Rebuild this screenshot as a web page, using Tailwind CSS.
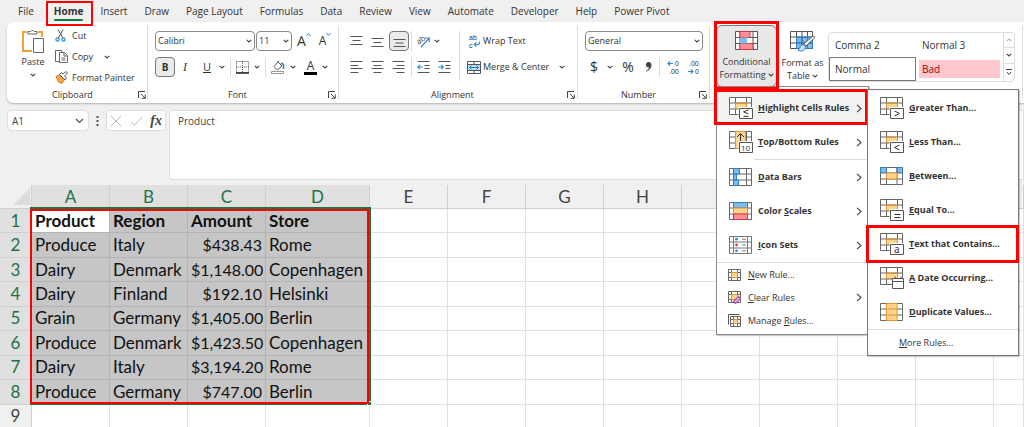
<!DOCTYPE html>
<html lang="en">
<head>
<meta charset="utf-8">
<title>Workbook</title>
<script src="https://cdn.jsdelivr.net/npm/@tailwindcss/browser@4"></script>
</head>
<body class="bg-[#f0f0f0] text-[#333] font-['Open_Sans','Noto_Sans',sans-serif] text-[10px] leading-[14px]">

<svg class="hidden">
  <symbol id="chev" viewBox="0 0 6 4"><path d="M.7.8 3 3 5.3.8" fill="none" stroke="#444" stroke-width="1.1"/></symbol>
  <symbol id="right" viewBox="0 0 6 9"><path d="M1 .8 5 4.500 1 8.200" fill="none" stroke="#444" stroke-width="1.1"/></symbol>
  <symbol id="launch" viewBox="0 0 8 8"><path d="M.5 7V.5H7M3 3l4 4M7.300 3.500v3.800H3.500" fill="none" stroke="#444"/></symbol>
  <symbol id="grid" viewBox="0 0 24 22">
    <path d="M.5.5h22v17H.5z" fill="#fff"/><path d="M6.500 6h11v6h-11z" fill="#fbd68c"/>
    <path d="M.5.5h22v17H.5zM.5 6h22M.5 12h22M6.500.5v17M17.500.5v17" fill="none" stroke="#666"/>
    <path d="M6.500 12V6h11v6" fill="none" stroke="#e8912d"/>
  </symbol>
  <symbol id="badge" viewBox="0 0 24 22"><path d="M9.500 10h15v12h-15z" fill="#fff"/><path d="M10.500 11.500h13v10h-13z" fill="#fff" stroke="#555"/></symbol>
</svg>

<div class="flex h-screen flex-col overflow-hidden">

  <!-- Ribbon tabs -->
  <nav class="flex h-[22px] shrink-0 items-center gap-[17px] pb-px pl-[18px] whitespace-nowrap">
    <a href="#">File</a>
    <a href="#" class="relative ml-[3px] font-bold text-[#333]">Home
      <span class="absolute inset-x-0 -bottom-[3px] h-[2px] rounded bg-[#107c41]"></span>
      <span class="absolute -right-[10px] -left-[8px] -top-[3px] -bottom-[8px] z-10 border-2 border-[#f00]"></span>
    </a>
    <a href="#">Insert</a><a href="#">Draw</a><a href="#">Page Layout</a><a href="#">Formulas</a><a href="#">Data</a><a href="#">Review</a><a href="#">View</a><a href="#">Automate</a><a href="#">Developer</a><a href="#">Help</a><a href="#">Power Pivot</a>
  </nav>

  <!-- Ribbon -->
  <div class="ml-[7px] flex h-[81px] shrink-0 rounded-l-md bg-white text-[9px] whitespace-nowrap shadow-[0_1px_2px_rgba(0,0,0,0.25)]">

    <section class="relative flex w-[141px] shrink-0 pt-[3px]">
      <button class="flex w-[48px] flex-col items-center pt-[3px] pl-[4px]">
        <svg class="h-[26px] w-[24px]" viewBox="0 0 24 26"><path d="M6 4H2v19h9M17 4h4v5" fill="none" stroke="#f0a33a" stroke-width="2"/><path d="M7 6V3.500h2.500a2.500 2.500 0 0 1 4 0H16V6z" fill="#fff" stroke="#666"/><path d="M12.500 10.500h10v14h-10z" fill="#fff" stroke="#666"/></svg>
        <span class="mt-px">Paste</span>
        <svg class="mt-[4px] h-[4px] w-[6px]"><use href="#chev"/></svg>
      </button>
      <div class="flex flex-col items-start">
        <button class="flex h-[21px] items-center gap-[5px]">
          <svg class="h-[13px] w-[12px]" viewBox="0 0 12 13"><path d="M3 .5 8 9M8 .5 3.500 9" fill="none" stroke="#555"/><circle cx="2.500" cy="10.500" r="1.600" fill="none" stroke="#2f8fd6" stroke-width="1.300"/><circle cx="8.500" cy="10.500" r="1.600" fill="none" stroke="#2f8fd6" stroke-width="1.300"/></svg>
          Cut</button>
        <button class="flex h-[21px] items-center gap-[4px]">
          <svg class="h-[13px] w-[13px]" viewBox="0 0 13 13"><path d="M4 11.500H.5V.5h6l1 2M4.500 2.500h5l3 3v7h-8zM9 3v3h3M6.500 8h4M6.500 10h4" fill="none" stroke="#666"/></svg>
          Copy <svg class="ml-[7px] h-[4px] w-[6px]"><use href="#chev"/></svg></button>
        <button class="flex h-[21px] items-center gap-[4px]">
          <svg class="h-[13px] w-[13px]" viewBox="0 0 13 13"><path d="M1 5.500 5 4l4.500 4.500L7 12.500 3.500 11z" fill="#f5a742" stroke="#e07b28"/><path d="m4.500 3.500 5.500 5.500 1.500-2-2-2 3-3L11 .5 8 3 6.500 1.500z" fill="#fff" stroke="#555"/></svg>
          Format Painter</button>
      </div>
      <span class="absolute bottom-[1px] left-[45px]">Clipboard</span>
      <svg class="absolute right-[2px] bottom-[4px] h-[8px] w-[8px]"><use href="#launch"/></svg>
      <span class="absolute top-[4px] right-0 bottom-[4px] w-px bg-[#ddd]"></span>
    </section>

    <section class="relative flex w-[191px] shrink-0 flex-col gap-[6px] pt-[9px] pl-[7px]">
      <div class="flex h-[20px] items-center">
        <button class="flex h-[20px] w-[100px] items-center justify-between rounded border border-[#8a8a8a] px-[2px]">Calibri <svg class="h-[4px] w-[6px]"><use href="#chev"/></svg></button>
        <button class="ml-[1px] flex h-[20px] w-[36px] items-center justify-between rounded border border-[#8a8a8a] px-[2px]">11 <svg class="h-[4px] w-[6px]"><use href="#chev"/></svg></button>
        <button class="ml-[5px] flex items-start text-[14px] leading-[18px]" aria-label="Grow font">A<svg class="h-[5px] w-[5px]" viewBox="0 0 5 5"><path d="M.5 4l2-2.500 2 2.500" fill="none" stroke="#2f8fd6"/></svg></button>
        <button class="ml-[8px] flex items-start text-[12px] leading-[18px]" aria-label="Shrink font">A<svg class="h-[5px] w-[5px]" viewBox="0 0 5 5"><path d="M.5 1l2 2.500 2-2.500" fill="none" stroke="#2f8fd6"/></svg></button>
      </div>
      <div class="flex h-[20px] items-center">
        <button class="h-[20px] w-[20px] rounded border border-[#777] bg-[#ebebeb] text-[10px] font-bold">B</button>
        <button class="w-[20px] font-['Liberation_Serif',serif] text-[12px] italic">I</button>
        <button class="w-[24px] text-[11px] underline">U</button>
        <svg class="h-[4px] w-[6px]"><use href="#chev"/></svg>
        <span class="mx-[5px] h-[20px] w-px bg-[#ddd]"></span>
        <svg class="h-[13px] w-[13px]" viewBox="0 0 13 13"><path d="M.5.5h12v11H.5zM6.500 0v12M0 6h13" fill="none" stroke="#555" stroke-dasharray="1 1"/><path d="M0 12h13" stroke="#222" stroke-width="1.500"/></svg>
        <svg class="ml-[5px] h-[4px] w-[6px]"><use href="#chev"/></svg>
        <span class="mx-[5px] h-[20px] w-px bg-[#ddd]"></span>
        <svg class="h-[14px] w-[14px]" viewBox="0 0 14 14"><path d="M3 6.500 7 2l4 4-4.500 4z M7 2V.5" fill="#fff" stroke="#555"/><path d="m10 3 2.500 1.500L12.500 9" fill="none" stroke="#2f7fc6" stroke-width="1.500"/><path d="M.5 11.500h12v2H.5z" fill="#fff" stroke="#999"/></svg>
        <svg class="ml-[5px] h-[4px] w-[6px]"><use href="#chev"/></svg>
        <button class="ml-[8px] h-[16px] w-[13px] border-b-[3px] border-black text-[12px] leading-[13px]">A</button>
        <svg class="ml-[5px] h-[4px] w-[6px]"><use href="#chev"/></svg>
      </div>
      <span class="absolute bottom-[1px] left-[80px]">Font</span>
      <svg class="absolute right-[3px] bottom-[4px] h-[8px] w-[8px]"><use href="#launch"/></svg>
      <span class="absolute top-[4px] right-0 bottom-[4px] w-px bg-[#ddd]"></span>
    </section>

    <section class="relative flex w-[239px] shrink-0 pt-[9px] pl-[8px]">
      <div class="flex flex-col gap-[6px]">
        <div class="flex h-[20px] items-center">
          <svg class="mx-[3px] h-[12px] w-[13px]" viewBox="0 0 13 12"><path d="M.5 1.500h12M2.500 5.500h8M.5 9.500h12" stroke="#555"/></svg>
          <svg class="mx-[5px] h-[12px] w-[13px]" viewBox="0 0 13 12"><path d="M.5 3.500h12M2.500 7.500h8M.5 11.500h12" stroke="#555"/></svg>
          <button class="flex h-[20px] w-[20px] items-center justify-center rounded border border-[#777] bg-[#ebebeb]" aria-label="Bottom align"><svg class="h-[14px] w-[13px]" viewBox="0 0 13 14"><path d="M.5 5.500h12M2.500 9h8M.5 12.500h12" stroke="#555"/></svg></button>
          <span class="mx-[2px] h-[20px] w-px bg-[#ddd]"></span>
          <svg class="ml-[2px] h-[14px] w-[15px] overflow-visible" viewBox="0 0 15 14"><text x="0" y="9" font-size="8" fill="#444" transform="rotate(-35 4 6)">ab</text><path d="M5 13 13 4.500M9 4h4.300v4" fill="none" stroke="#2f8fd6" stroke-width="1.200"/></svg>
          <svg class="ml-[3px] h-[4px] w-[6px]"><use href="#chev"/></svg>
        </div>
        <div class="flex h-[20px] items-center">
          <svg class="mx-[3px] h-[12px] w-[13px]" viewBox="0 0 13 12"><path d="M.5 .5h12M.5 4.500h8M.5 7.500h12M.5 11.500h8" stroke="#555"/></svg>
          <svg class="mx-[5px] h-[12px] w-[13px]" viewBox="0 0 13 12"><path d="M.5 .5h12M2.500 4.500h8M.5 7.500h12M2.500 11.500h8" stroke="#555"/></svg>
          <svg class="mx-[3px] h-[12px] w-[13px]" viewBox="0 0 13 12"><path d="M.5 .5h12M4.500 4.500h8M.5 7.500h12M4.500 11.500h8" stroke="#555"/></svg>
          <span class="mx-[3px] h-[20px] w-px bg-[#ddd]"></span>
          <svg class="ml-[2px] h-[12px] w-[13px]" viewBox="0 0 13 12"><path d="M.5 .5h12M7.500 4.500h5M7.500 7.500h5M.5 11.500h12" stroke="#555"/><path d="M6 6H1M3 3.800.8 6 3 8.200" fill="none" stroke="#2f8fd6" stroke-width="1.200"/></svg>
          <svg class="ml-[8px] h-[12px] w-[13px]" viewBox="0 0 13 12"><path d="M.5 .5h12M7.500 4.500h5M7.500 7.500h5M.5 11.500h12" stroke="#555"/><path d="M0 6h5M3.200 3.800 5.400 6 3.200 8.200" fill="none" stroke="#2f8fd6" stroke-width="1.200"/></svg>
        </div>
      </div>
      <span class="ml-[8px] h-[50px] w-px bg-[#ddd]"></span>
      <div class="ml-[7px] flex flex-col gap-[6px]">
        <button class="flex h-[20px] items-center gap-[2px]"><svg class="h-[15px] w-[14px] overflow-visible font-['Liberation_Sans',sans-serif]" viewBox="0 0 14 15"><text x="2" y="6" font-size="7" fill="#333">ab</text><text x="2" y="14" font-size="7" fill="#333">c</text><path d="M12.500 7.500V9a1.500 1.500 0 0 1-1.500 1.500H7.500M9.500 8.200 7.300 10.500l2.200 2.200" fill="none" stroke="#2f8fd6" stroke-width="1.200"/></svg>Wrap Text</button>
        <button class="flex h-[20px] items-center gap-[2px]"><svg class="h-[13px] w-[14px]" viewBox="0 0 14 13"><path d="M.5 3.500h13v6H.5z" fill="#bfe0f7"/><path d="M.5.5h13v12H.5zM.5 3.500h13M.5 9.500h13M7 .5v3M7 9.500v3" fill="none" stroke="#555"/><path d="M2.500 6.500h9M4.500 4.500l-2 2 2 2M9.500 4.500l2 2-2 2" fill="none" stroke="#1f7fd0"/></svg>Merge &amp; Center<svg class="ml-[8px] h-[4px] w-[6px]"><use href="#chev"/></svg></button>
      </div>
      <span class="absolute bottom-[1px] left-[92px]">Alignment</span>
      <svg class="absolute right-[3px] bottom-[4px] h-[8px] w-[8px]"><use href="#launch"/></svg>
      <span class="absolute top-[4px] right-0 bottom-[4px] w-px bg-[#ddd]"></span>
    </section>

    <section class="relative flex w-[132px] shrink-0 flex-col gap-[6px] pt-[9px] pl-[7px]">
      <button class="flex h-[20px] w-[118px] items-center justify-between rounded border border-[#8a8a8a] px-[2px]">General <svg class="h-[4px] w-[6px]"><use href="#chev"/></svg></button>
      <div class="flex h-[20px] items-center">
        <button class="w-[18px] text-[14px]">$</button>
        <svg class="ml-[4px] h-[4px] w-[6px]"><use href="#chev"/></svg>
        <button class="ml-[6px] w-[18px] text-[14px]">%</button>
        <svg class="ml-[8px] h-[10px] w-[7px]" viewBox="0 0 7 10"><path d="M3 0a3 3 0 0 1 3.500 3C6.500 6 4.500 8.500 1 9.800L.8 9C3 8 4 6.800 4 5.500A2.800 2.800 0 0 1 3 0z" fill="#444"/></svg>
        <span class="mx-[7px] h-[20px] w-px bg-[#ddd]"></span>
        <svg class="h-[15px] w-[14px] overflow-visible font-['Liberation_Sans',sans-serif]" viewBox="0 0 14 15"><path d="M6 3.500H1M3 1.500l-2 2 2 2" fill="none" stroke="#2f8fd6" stroke-width="1.200"/><text x="8" y="6" font-size="7" fill="#333">0</text><text x="2" y="14" font-size="7" fill="#333">.00</text></svg>
        <svg class="ml-[6px] h-[15px] w-[14px] overflow-visible font-['Liberation_Sans',sans-serif]" viewBox="0 0 14 15"><path d="M1 11.500h5M4 9.500l2 2-2 2" fill="none" stroke="#2f8fd6" stroke-width="1.200"/><text x="2" y="6" font-size="7" fill="#333">.00</text><text x="8" y="14" font-size="7" fill="#333">0</text></svg>
      </div>
      <span class="absolute bottom-[1px] left-[43px]">Number</span>
      <svg class="absolute right-[3px] bottom-[4px] h-[8px] w-[8px]"><use href="#launch"/></svg>
      <span class="absolute top-[4px] right-0 bottom-[4px] w-px bg-[#ddd]"></span>
    </section>

    <section class="relative flex min-w-0 grow gap-[3px] pt-[3px] pl-[6px]">
      <!-- Conditional formatting and its menus -->
      <div class="relative h-[62px] w-[61px] shrink-0">
        <button class="flex h-[62px] w-full flex-col items-center rounded-md border border-[#777] bg-[#e8e8e8] pt-[5px] leading-[13px]">
          <svg class="mb-[5px] h-[19px] w-[23px]" viewBox="0 0 23 19"><path d="M.5.5h22v18H.5z" fill="#fff"/><path d="M.5.5h22v18H.5zM.5 6.500h22M.5 12.500h22M5 .5v18M18 .5v18M11.500.5v18" fill="none" stroke="#555"/><path d="M5 .5h10v6H5zM5 12.500h13v6H5z" fill="#ff8f96" stroke="#d9363e"/><path d="M5 6.500h7v6H5z" fill="#7fbcec"/></svg>
          <span>Conditional</span>
          <span class="flex items-center gap-[2px]">Formatting <svg class="h-[4px] w-[6px]"><use href="#chev"/></svg></span>
        </button>
        <span class="pointer-events-none absolute -top-[4px] -right-[2px] -bottom-[3px] -left-[2px] z-30 border-[3px] border-[#f00]"></span>

        <div class="absolute top-[61px] left-0 z-20 w-[153px] border border-[#8a8a8a] bg-white pt-[4px] pb-[2px] text-[#333] shadow-[1px_1px_1px_rgba(0,0,0,0.2)]">
          <button class="relative flex h-[34px] w-full items-center bg-[#f2f2f2] pl-[12px] font-bold">
            <svg class="h-[22px] w-[25px] shrink-0" viewBox="0 0 25 22"><use href="#grid" width="24" height="22"/><use href="#badge" width="24" height="22"/><path d="m19.500 12.800-5 2 5 2M14.500 19.300h5" fill="none" stroke="#333"/></svg>
            <span class="ml-[4px]"><u>H</u>ighlight Cells Rules</span><svg class="absolute right-[6px] h-[9px] w-[6px]"><use href="#right"/></svg>
            <span class="pointer-events-none absolute -top-[2px] right-0 bottom-0 -left-[3px] border-[3px] border-[#f00]"></span>
          </button>
          <button class="relative flex h-[34px] w-full items-center pl-[12px] font-bold">
            <svg class="h-[22px] w-[25px] shrink-0" viewBox="0 0 25 22"><path d="M.5.5h22v17H.5zM.5 6h22M.5 12h22M6.500.5v17M17.500.5v17" fill="#fff" stroke="#666"/><path d="M6.500.5h10v17h-10z" fill="#fbd68c" stroke="#e8912d"/><path d="M11.500 12V3M8 6l3.500-3.500L15 6" fill="none" stroke="#333"/><use href="#badge" width="24" height="22"/><text x="12" y="20" font-size="8" font-weight="400" fill="#333">10</text></svg>
            <span class="ml-[4px]"><u>T</u>op/Bottom Rules</span><svg class="absolute right-[6px] h-[9px] w-[6px]"><use href="#right"/></svg>
          </button>
          <hr class="ml-[37px] border-[#ddd]">
          <button class="relative flex h-[34px] w-full items-center pl-[12px] font-bold">
            <svg class="h-[18px] w-[25px] shrink-0" viewBox="0 0 25 18"><path d="M.5.5h22v17H.5zM.5 6h22M.5 12h22M4.500.5v17M17.500.5v17" fill="#fff" stroke="#666"/><path d="M4.500.5h6v5.500h-6zM4.500 6h3v6h-3zM4.500 12h5v5.500h-5z" fill="#7fbcec" stroke="#2f7fc6"/></svg>
            <span class="ml-[4px]"><u>D</u>ata Bars</span><svg class="absolute right-[6px] h-[9px] w-[6px]"><use href="#right"/></svg>
          </button>
          <button class="relative flex h-[34px] w-full items-center pl-[12px] font-bold">
            <svg class="h-[18px] w-[25px] shrink-0" viewBox="0 0 25 18"><path d="M.5.5h22v17H.5zM.5 6h22M.5 12h22" fill="#fff" stroke="#666"/><path d="M4.500.5h14V6h-14z" fill="#7fbcec" stroke="#2f7fc6"/><path d="M4.500 6h14v6h-14z" fill="#fbd68c" stroke="#e8912d"/><path d="M4.500 12h14v5.500h-14z" fill="#ff8f96" stroke="#d9363e"/></svg>
            <span class="ml-[4px]">Color <u>S</u>cales</span><svg class="absolute right-[6px] h-[9px] w-[6px]"><use href="#right"/></svg>
          </button>
          <button class="relative flex h-[34px] w-full items-center pl-[12px] font-bold">
            <svg class="h-[18px] w-[25px] shrink-0" viewBox="0 0 25 18"><path d="M.5.5h22v17H.5zM.5 6h22M.5 12h22M4.500.5v17M18.500.5v17" fill="#fff" stroke="#777"/><path d="M13 3.200h4M13 9h4M13 14.800h4" stroke="#777"/><circle cx="7.500" cy="3.200" r="1.400" fill="#2f8fd6"/><circle cx="7.500" cy="9" r="1.400" fill="#e23b43"/><circle cx="7.500" cy="14.800" r="1.400" fill="#2f8fd6"/></svg>
            <span class="ml-[4px]"><u>I</u>con Sets</span><svg class="absolute right-[6px] h-[9px] w-[6px]"><use href="#right"/></svg>
          </button>
          <hr class="border-[#ddd]">
          <button class="flex h-[23px] w-full items-center gap-[7px] pl-[11px]">
            <svg class="h-[12px] w-[13px]" viewBox="0 0 13 12"><path d="M.5.5h12v11H.5zM.5 3.500h12M.5 8.500h12M3.500.5v11M9.500.5v11" fill="#fff" stroke="#666"/><path d="M3.500 3.500h6v5h-6z" fill="#fbd68c" stroke="#e8912d"/></svg>
            <span><u>N</u>ew Rule...</span></button>
          <button class="relative flex h-[23px] w-full items-center gap-[7px] pl-[11px]">
            <svg class="h-[13px] w-[13px]" viewBox="0 0 13 13"><path d="M.5.5h12v11H.5zM.5 3.500h12M.5 8.500h12M3.500.5v11M9.500.5v11" fill="#fff" stroke="#666"/><path d="M3.500 3.500h6v5h-6z" fill="#fbd68c" stroke="#e8912d"/><path d="m5.500 10.500 5-5 2 2-5 5z" fill="#e5c4ec" stroke="#a34bb5" stroke-width="1.200"/></svg>
            <span><u>C</u>lear Rules</span><svg class="absolute right-[6px] h-[9px] w-[6px]"><use href="#right"/></svg></button>
          <button class="flex h-[23px] w-full items-center gap-[7px] pl-[11px]">
            <svg class="h-[13px] w-[13px]" viewBox="0 0 13 13"><path d="M.5 10.500V.5h11" fill="none" stroke="#555"/><path d="M2.500 2.500h10v10h-10zM2.500 5.500h10M2.500 9.500h10M5.500 2.500v10M9.500 2.500v10" fill="#fff" stroke="#666"/><path d="M5.500 5.500h4v4h-4z" fill="#fbd68c" stroke="#e8912d"/></svg>
            <span>Manage <u>R</u>ules...</span></button>
        </div>

        <div class="absolute top-[64px] left-[151px] z-20 w-[152px] border border-[#777] bg-white pt-px text-[#333] shadow-[1px_1px_1px_rgba(0,0,0,0.2)]">
          <button class="flex h-[34px] w-full items-center pl-[12px] font-bold">
            <svg class="h-[22px] w-[25px] shrink-0" viewBox="0 0 25 22"><use href="#grid" width="24" height="22"/><use href="#badge" width="24" height="22"/><path d="m14.500 14 5 2.500-5 2.500" fill="none" stroke="#333"/></svg>
            <span class="ml-[4px]"><u>G</u>reater Than...</span></button>
          <button class="flex h-[34px] w-full items-center pl-[12px] font-bold">
            <svg class="h-[22px] w-[25px] shrink-0" viewBox="0 0 25 22"><use href="#grid" width="24" height="22"/><use href="#badge" width="24" height="22"/><path d="m19.500 14-5 2.500 5 2.500" fill="none" stroke="#333"/></svg>
            <span class="ml-[4px]"><u>L</u>ess Than...</span></button>
          <button class="flex h-[34px] w-full items-center pl-[12px] font-bold">
            <svg class="h-[18px] w-[25px] shrink-0" viewBox="0 0 25 18"><path d="M.5.5h22v17H.5z" fill="#fff"/><path d="M.5.5h6V6h-6zM17 .5h5.500V6H17z" fill="#7fbcec"/><path d="M.5.5h22v17H.5zM.5 6h22M.5 12h22M6.500.5v17M17 .5v17" fill="none" stroke="#666"/><path d="M6.500 6H17v6H6.500z" fill="#fbd68c" stroke="#e8912d"/><path d="M.5 6V.5h6V6M17 6V.5h5.500V6" fill="none" stroke="#2f7fc6"/></svg>
            <span class="ml-[4px]"><u>B</u>etween...</span></button>
          <button class="flex h-[34px] w-full items-center pl-[12px] font-bold">
            <svg class="h-[22px] w-[25px] shrink-0" viewBox="0 0 25 22"><use href="#grid" width="24" height="22"/><use href="#badge" width="24" height="22"/><path d="M14.500 15.500h6M14.500 18.500h6" fill="none" stroke="#333"/></svg>
            <span class="ml-[4px]"><u>E</u>qual To...</span></button>
          <button class="relative flex h-[34px] w-full items-center pl-[12px] font-bold">
            <svg class="h-[22px] w-[25px] shrink-0" viewBox="0 0 25 22"><use href="#grid" width="24" height="22"/><use href="#badge" width="24" height="22"/><text x="14" y="20" font-size="10" font-weight="400" fill="#333" font-family="Noto Sans">a</text></svg>
            <span class="ml-[4px]"><u>T</u>ext that Contains...</span>
            <span class="pointer-events-none absolute inset-y-[-2px] -right-px -left-[2px] border-[3px] border-[#f00]"></span></button>
          <button class="flex h-[34px] w-full items-center pl-[12px] font-bold">
            <svg class="h-[22px] w-[25px] shrink-0" viewBox="0 0 25 22"><use href="#grid" width="24" height="22"/><path d="M12.500 11.500h11v10h-11zM12.500 14.500h11M15 9.500v2M21 9.500v2" fill="#fff" stroke="#555"/></svg>
            <span class="ml-[4px]"><u>A</u> Date Occurring...</span></button>
          <button class="flex h-[34px] w-full items-center pl-[12px] font-bold">
            <svg class="h-[18px] w-[25px] shrink-0" viewBox="0 0 25 18"><path d="M.5.5h22v17H.5zM.5 6h22M.5 12h22" fill="#fff" stroke="#666"/><path d="M6.500.5H17v17H6.500zM6.500 6H17M6.500 12H17" fill="#fbd68c" stroke="#e8912d"/></svg>
            <span class="ml-[4px]"><u>D</u>uplicate Values...</span></button>
          <hr class="border-[#ddd]">
          <button class="flex h-[25px] w-full items-center pl-[31px]"><span><u>M</u>ore Rules...</span></button>
        </div>
      </div>

      <button class="flex h-[62px] w-[45px] shrink-0 flex-col items-center pt-[6px] leading-[13px]">
        <svg class="mb-[3px] h-[22px] w-[26px]" viewBox="0 0 26 22"><path d="M.5.5h22v17H.5z" fill="#fff"/><path d="M6.500 6h16v11.500h-16z" fill="#7fbcec"/><path d="M.5.5h22v17H.5zM.5 6h22M.5 12h22M6.500.5v17M12 .5v17M17.500.5v17" fill="none" stroke="#555"/><path d="M6.500 6h16v11.500h-16zM6.500 12h16M12 6v11.500M17.500 6v11.500" fill="none" stroke="#2f7fc6"/><path d="M25 6.500 16 15l-2.500-2L23 5z" fill="#fff" stroke="#555"/><path d="M13 13.500c-3 0-2.500 4-5 5.500 2.500 2 7.500 1 7.500-3.500z" fill="#cfe6f8" stroke="#2f7fc6"/></svg>
        <span>Format as</span>
        <span class="flex items-center gap-[2px]">Table <svg class="h-[4px] w-[6px]"><use href="#chev"/></svg></span>
      </button>

      <div class="mt-[7px] flex h-[50px] w-[187px] shrink-0 rounded border border-[#ddd] text-[10px]">
        <div class="grid grow grid-cols-2 grid-rows-2">
          <button class="pl-[6px] text-left">Comma 2</button><button class="pl-[6px] text-left">Normal 3</button>
          <button class="border border-[#777] pl-[5px] text-left">Normal</button><button class="m-[3px] bg-[#ffc7ce] pl-[3px] text-left text-[#9c0006]">Bad</button>
        </div>
        <div class="flex w-[11px] flex-col divide-y divide-[#ddd] border-l border-[#ddd]">
          <button class="flex grow items-center justify-center" aria-label="Scroll up"><svg class="h-[4px] w-[6px] rotate-180 opacity-40"><use href="#chev"/></svg></button>
          <button class="flex grow items-center justify-center" aria-label="Scroll down"><svg class="h-[4px] w-[6px]"><use href="#chev"/></svg></button>
          <button class="flex grow items-center justify-center" aria-label="More styles"><svg class="h-[7px] w-[6px]" viewBox="0 0 6 7"><path d="M0 .5h6M1 3l2 2.500L5 3" fill="none" stroke="#444"/></svg></button>
        </div>
      </div>
      <span class="absolute top-[4px] right-[1px] bottom-[4px] w-px bg-[#ddd]"></span>
    </section>
  </div>

  <!-- Formula bar -->
  <div class="mt-[7px] flex h-[70px] shrink-0 items-start pl-[7px] text-[#444]">
    <button class="flex h-[21px] w-[82px] items-center justify-between rounded border border-[#ddd] bg-white px-[4px]">A1 <svg class="h-[6px] w-[9px]" viewBox="0 0 9 6"><path d="m1 1 3.500 3.500L8 1" fill="none" stroke="#555" stroke-width="1.200"/></svg></button>
    <svg class="mx-[7px] mt-[6px] h-[10px] w-[3px]" viewBox="0 0 3 10"><path d="M.5 1h2M.5 5h2M.5 9h2" stroke="#555" stroke-width="2"/></svg>
    <div class="flex h-[21px] w-[60px] items-center justify-between rounded border border-[#ddd] bg-white px-[3px]">
      <svg class="h-[12px] w-[12px]" viewBox="0 0 12 12"><path d="m1 1 10 10M11 1 1 11" stroke="#bbb"/></svg>
      <svg class="h-[12px] w-[13px]" viewBox="0 0 13 12"><path d="m1 7 3.500 3.500L12 2" fill="none" stroke="#bbb"/></svg>
      <button class="font-['Liberation_Serif',serif] text-[14px] font-bold italic">fx</button>
    </div>
    <textarea aria-label="Formula" class="ml-[3px] h-[70px] grow resize-none rounded-l border border-[#ddd] bg-white px-[8px] py-[3px]">Product</textarea>
  </div>

  <!-- Worksheet; the last row runs slightly past the window's lower edge -->
  <div class="relative mt-[5px] -mb-[2px] min-h-0 grow">
  <table class="h-full w-full table-fixed border-separate border-spacing-0 bg-white font-['Lato','Open_Sans',sans-serif] text-[17px] leading-[20px] text-[#111] [&_td]:border-r [&_td]:border-b [&_td]:border-[#e1e1e1] [&_td]:p-0 [&_td]:whitespace-nowrap [&_th]:p-0 [&_th]:font-normal">
    <colgroup><col class="w-[32px]"><col class="w-[78px]"><col class="w-[78px]"><col class="w-[78px]"><col class="w-[104px]"><col class="w-[78px]"><col class="w-[78px]"><col class="w-[78px]"><col class="w-[78px]"><col class="w-[78px]"><col class="w-[78px]"><col class="w-[78px]"><col class="w-[78px]"><col></colgroup>
    <thead class="bg-[#f0f0f0] text-[#444] [&_th]:h-[24px] [&_th]:border-r [&_th]:border-b [&_th]:border-[#d0d0d0]">
      <tr>
        <th><svg class="ml-auto h-[17px] w-[18px]" viewBox="0 0 18 17"><path d="M17 0v17H0z" fill="#dcdcdc"/></svg></th>
        <th class="bg-[#e0e0e0] text-[#217346]">A</th><th class="bg-[#e0e0e0] text-[#217346]">B</th><th class="bg-[#e0e0e0] text-[#217346]">C</th><th class="bg-[#e0e0e0] text-[#217346]">D</th>
        <th>E</th><th>F</th><th>G</th><th>H</th><th></th><th></th><th></th><th></th><th></th>
      </tr>
    </thead>
    <tbody class="[&_th]:border-r [&_th]:border-b [&_th]:border-[#d0d0d0] [&_td:nth-child(-n+5)]:px-[3px] [&_td:nth-child(4)]:text-right [&_td:nth-child(4)]:text-[16px]">
      <tr class="[&_td:nth-child(-n+5)]:border-[#b3b3b3] [&_td:nth-child(-n+5)]:bg-[#c6c6c6] [&_td]:font-bold"><th class="bg-[#e0e0e0] text-[#217346]">1</th><td class="bg-white!">Product</td><td>Region</td><td class="text-left! text-[17px]!">Amount</td><td>Store</td><td></td><td></td><td></td><td></td><td></td><td></td><td></td><td></td><td></td></tr>
      <tr class="[&_td:nth-child(-n+5)]:border-[#b3b3b3] [&_td:nth-child(-n+5)]:bg-[#c6c6c6]"><th class="bg-[#e0e0e0] text-[#217346]">2</th><td>Produce</td><td>Italy</td><td>$438.43</td><td>Rome</td><td></td><td></td><td></td><td></td><td></td><td></td><td></td><td></td><td></td></tr>
      <tr class="[&_td:nth-child(-n+5)]:border-[#b3b3b3] [&_td:nth-child(-n+5)]:bg-[#c6c6c6]"><th class="bg-[#e0e0e0] text-[#217346]">3</th><td>Dairy</td><td>Denmark</td><td>$1,148.00</td><td>Copenhagen</td><td></td><td></td><td></td><td></td><td></td><td></td><td></td><td></td><td></td></tr>
      <tr class="[&_td:nth-child(-n+5)]:border-[#b3b3b3] [&_td:nth-child(-n+5)]:bg-[#c6c6c6]"><th class="bg-[#e0e0e0] text-[#217346]">4</th><td>Dairy</td><td>Finland</td><td>$192.10</td><td>Helsinki</td><td></td><td></td><td></td><td></td><td></td><td></td><td></td><td></td><td></td></tr>
      <tr class="[&_td:nth-child(-n+5)]:border-[#b3b3b3] [&_td:nth-child(-n+5)]:bg-[#c6c6c6]"><th class="bg-[#e0e0e0] text-[#217346]">5</th><td>Grain</td><td>Germany</td><td>$1,405.00</td><td>Berlin</td><td></td><td></td><td></td><td></td><td></td><td></td><td></td><td></td><td></td></tr>
      <tr class="[&_td:nth-child(-n+5)]:border-[#b3b3b3] [&_td:nth-child(-n+5)]:bg-[#c6c6c6]"><th class="bg-[#e0e0e0] text-[#217346]">6</th><td>Produce</td><td>Denmark</td><td>$1,423.50</td><td>Copenhagen</td><td></td><td></td><td></td><td></td><td></td><td></td><td></td><td></td><td></td></tr>
      <tr class="[&_td:nth-child(-n+5)]:border-[#b3b3b3] [&_td:nth-child(-n+5)]:bg-[#c6c6c6]"><th class="bg-[#e0e0e0] text-[#217346]">7</th><td>Dairy</td><td>Italy</td><td>$3,194.20</td><td>Rome</td><td></td><td></td><td></td><td></td><td></td><td></td><td></td><td></td><td></td></tr>
      <tr class="[&_td:nth-child(-n+5)]:border-[#b3b3b3] [&_td:nth-child(-n+5)]:bg-[#c6c6c6]"><th class="bg-[#e0e0e0] text-[#217346]">8</th><td>Produce</td><td>Germany</td><td>$747.00</td><td>Berlin</td><td></td><td></td><td></td><td></td><td></td><td></td><td></td><td></td><td></td></tr>
      <tr><th class="bg-[#f0f0f0] text-[#444]">9</th><td></td><td></td><td></td><td></td><td></td><td></td><td></td><td></td><td></td><td></td><td></td><td></td><td></td></tr>
    </tbody>
  </table>
  <!-- Selection outline with fill handle -->
  <div class="pointer-events-none absolute top-[22px] bottom-[24px] left-[30px] w-[341px] border-2 border-[#217346]">
    <span class="absolute -right-[3px] -bottom-[3px] h-[5px] w-[5px] border border-white bg-[#217346]"></span>
    <span class="absolute top-0 right-0 -bottom-px -left-[2px] border-2 border-[#f00]"></span>
  </div>
  </div>
</div>
</body>
</html>
